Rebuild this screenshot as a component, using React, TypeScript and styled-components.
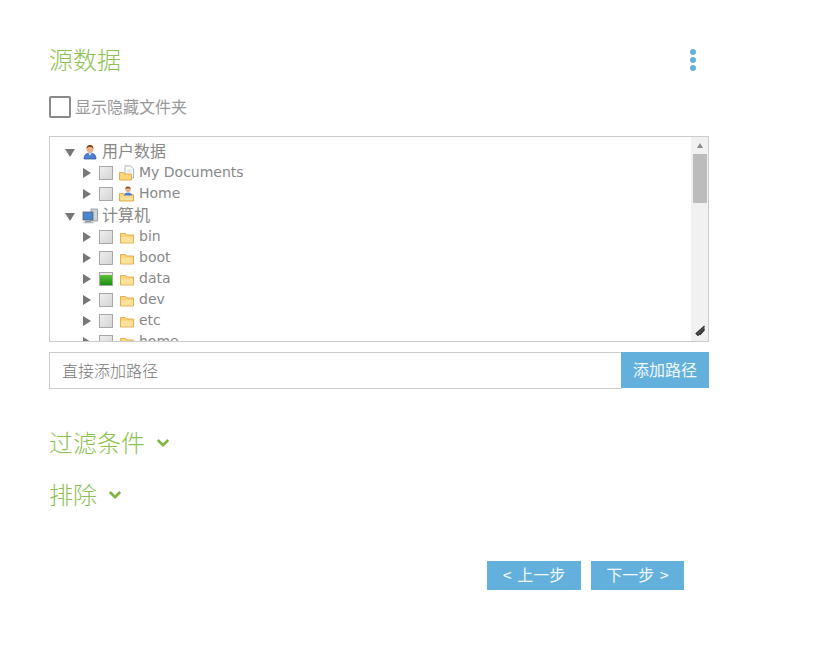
import { createGlobalStyle } from "styled-components";
import styled from "styled-components";

const CJK = `"Noto Sans CJK SC", "Noto Sans", sans-serif`;
const GREEN = "#8cc152";
const BLUE = "#64b0dc";

const GlobalStyle = createGlobalStyle`
  html, body {
    margin: 0;
    padding: 0;
    background: #fff;
    font-family: ${CJK};
  }
`;

const Page = styled.div`
  width: 660px;
  padding: 40px 0 0 49px;
`;

const Header = styled.div`
  display: flex;
  justify-content: space-between;
  align-items: center;
  height: 40px;
  padding-right: 13px;
`;

const Title = styled.h2`
  margin: 0 0 3px;
  font-size: 24px;
  line-height: 37px;
  font-weight: 300;
  color: ${GREEN};
`;

const Dots = styled.div`
  display: flex;
  flex-direction: column;
  gap: 2px;
`;

const Dot = styled.span`
  width: 6px;
  height: 6px;
  border-radius: 50%;
  background: ${BLUE};
`;

const HiddenToggle = styled.label`
  display: flex;
  align-items: center;
  gap: 4px;
  margin-top: 16px;
  height: 22px;
  font-size: 16px;
  color: #999;
`;

const ToggleText = styled.span`
  margin-bottom: 2px;
`;

const Box = styled.span`
  box-sizing: border-box;
  width: 22px;
  height: 22px;
  border: 2px solid #8a8a8a;
  border-radius: 2px;
`;

const TreePanel = styled.div`
  position: relative;
  box-sizing: border-box;
  display: flex;
  height: 206px;
  margin-top: 18px;
  border: 1px solid #ccc;
  overflow: hidden;
`;

const Tree = styled.div`
  flex: 1;
  padding: 4px 0 0 15px;
  overflow: hidden;
`;

const Row = styled.div<{ $child?: boolean; $gap?: number }>`
  display: flex;
  align-items: center;
  height: 21px;
  margin-top: ${(p) => p.$gap ?? 0}px;
  padding-left: ${(p) => (p.$child ? 18 : 0)}px;
  font-family: "DejaVu Sans", ${CJK};
  font-size: 14px;
  color: #888;
  white-space: nowrap;
`;

const Arrow = styled.span<{ $open?: boolean }>`
  width: 0;
  height: 0;
  flex: none;
  ${(p) =>
    p.$open
      ? `
    margin: 2px 7px 0 0;
    border-left: 5.5px solid transparent;
    border-right: 5.5px solid transparent;
    border-top: 8px solid #777;
  `
      : `
    margin: 1px 8px 0 0;
    border-top: 5.5px solid transparent;
    border-bottom: 5.5px solid transparent;
    border-left: 8px solid #777;
  `}
`;

const NodeCheck = styled.span<{ $checked?: boolean }>`
  box-sizing: border-box;
  flex: none;
  width: 14px;
  height: 14px;
  margin-right: 6px;
  border: 1px solid #a8a8a8;
  background: ${(p) =>
    p.$checked
      ? "linear-gradient(#e8e8e8 0 2px, #5cc23c 2px, #1e8f12)"
      : "linear-gradient(135deg, #eeeeee, #d4d4d4)"};
`;

const IconSlot = styled.span`
  display: flex;
  flex: none;
  width: 16px;
  height: 16px;
  margin-right: 4px;
`;

const Label = styled.span`
  line-height: 21px;
`;

const RootLabel = styled(Label)`
  font-family: ${CJK};
  font-size: 16px;
  font-weight: 400;
  margin-bottom: 3px;
`;

const ScrollTrack = styled.div`
  box-sizing: border-box;
  flex: none;
  display: flex;
  flex-direction: column;
  width: 17px;
  background: #f1f1f1;
  padding: 0 1px;
`;

const ScrollUp = styled.span`
  width: 0;
  height: 0;
  margin: 6px auto 6px;
  border-left: 3.5px solid transparent;
  border-right: 3.5px solid transparent;
  border-bottom: 5px solid #8c8c8c;
`;

const ScrollThumb = styled.div`
  width: 14px;
  height: 49px;
  margin: 0 auto;
  background: #bcbcbc;
`;

const Grip = styled.svg`
  position: absolute;
  right: 2px;
  bottom: 5px;
`;

const PathRow = styled.div`
  display: flex;
  height: 37px;
  margin-top: 10px;
`;

const PathInput = styled.input`
  box-sizing: border-box;
  flex: 1;
  min-width: 0;
  height: 37px;
  padding: 0 12px 2px;
  border: 1px solid #ccc;
  border-right: none;
  outline: none;
  font-family: ${CJK};
  font-size: 16px;
  font-weight: 300;
  color: #777;
  &::placeholder {
    color: #777;
    opacity: 1;
  }
`;

const BlueButton = styled.button`
  border: none;
  padding: 0 0 3px;
  background: ${BLUE};
  color: #f0f9ff;
  font-family: ${CJK};
  font-size: 16px;
  font-weight: 400;
  word-spacing: 2px;
`;

const AddButton = styled(BlueButton)`
  width: 88px;
  height: 36px;
`;

const Section = styled.div<{ $gap: number }>`
  display: flex;
  align-items: center;
  gap: 11px;
  height: 36px;
  margin-top: ${(p) => p.$gap}px;
  font-size: 24px;
  font-weight: 300;
  color: ${GREEN};
`;

const SectionLabel = styled.span`
  margin-bottom: 4px;
`;

const Footer = styled.div`
  display: flex;
  justify-content: flex-end;
  gap: 10px;
  margin-top: 48px;
  padding-right: 25px;
`;

const NavButton = styled(BlueButton)<{ $w: number }>`
  width: ${(p) => p.$w}px;
  height: 29px;
`;

function UserIcon() {
  return (
    <svg width="16" height="16" viewBox="0 0 16 16">
      <path d="M2 15c0-4 2-6 6-6s6 2 6 6z" fill="#4f7fd0" stroke="#2c4f96" strokeWidth="0.7" />
      <path d="M6.4 9.2 8 11.5l1.6-2.3z" fill="#fff" />
      <circle cx="8" cy="5" r="3.4" fill="#eeb184" />
      <path d="M4.6 5C4.4 1.8 6.2 1 8 1s3.6.8 3.4 4c-.8-1.6-1.8-2-3.4-2s-2.6.4-3.4 2z" fill="#7a4318" />
    </svg>
  );
}

function ComputerIcon() {
  return (
    <svg width="16" height="16" viewBox="0 0 16 16">
      <rect x="9" y="1" width="6.5" height="12" fill="#cfd3d8" stroke="#7d848c" strokeWidth="0.7" />
      <rect x="1" y="4" width="10" height="8" fill="#4b86cf" stroke="#5c6670" strokeWidth="0.8" />
      <rect x="3" y="12.5" width="6" height="2" fill="#8d949b" />
      <rect x="1.5" y="14" width="10" height="1.3" fill="#b4b9be" />
    </svg>
  );
}

function FolderIcon() {
  return (
    <svg width="16" height="16" viewBox="0 0 16 16">
      <path d="M1.5 14V4.5h5l1 1.5h7v8z" fill="#fbd576" stroke="#dca94a" strokeWidth="0.9" />
      <rect x="2.3" y="8" width="11.4" height="5.4" fill="#fce29c" />
    </svg>
  );
}

function DocFolderIcon() {
  return (
    <svg width="16" height="16" viewBox="0 0 16 16">
      <path d="M6 .8h5.5l3 3v9H6z" fill="#fff" stroke="#9aa0a6" strokeWidth="0.8" />
      <path d="M8 5h4.5M8 7h4.5" stroke="#c4c8cc" strokeWidth="0.8" />
      <path d="M.5 15V7.5h4l1 1.5h7v6z" fill="#fbd576" stroke="#dca94a" strokeWidth="0.9" />
    </svg>
  );
}

function HomeFolderIcon() {
  return (
    <svg width="16" height="16" viewBox="0 0 16 16">
      <path d="M.5 15V7.5h4l1 1h9v6.5z" fill="#fbd576" stroke="#dca94a" strokeWidth="0.9" />
      <path d="M5 9.5C5 7.5 6.5 6.5 9 6.5s4 1 4 3z" fill="#4f7fd0" />
      <circle cx="9" cy="3.6" r="2.6" fill="#eeb184" />
      <path d="M6.4 3.6C6.2 1.4 7.6.6 9 .6s2.8.8 2.6 3C11 2.6 10.2 2.2 9 2.2s-2 .4-2.6 1.4z" fill="#7a4318" />
      <rect x="2" y="10.5" width="12" height="3.5" fill="#fce29c" />
    </svg>
  );
}

function Chevron() {
  return (
    <svg width="14" height="10" viewBox="0 0 14 10">
      <path d="M1.8 2 7 7.2 12.2 2" fill="none" stroke="#7fb53f" strokeWidth="2.6" />
    </svg>
  );
}

const folders = ["bin", "boot", "data", "dev", "etc", "home"];

export default function App() {
  return (
    <Page>
      <GlobalStyle />
      <Header>
        <Title>源数据</Title>
        <Dots>
          <Dot />
          <Dot />
          <Dot />
        </Dots>
      </Header>

      <HiddenToggle>
        <Box />
        <ToggleText>显示隐藏文件夹</ToggleText>
      </HiddenToggle>

      <TreePanel>
        <Tree>
          <Row>
            <Arrow $open />
            <IconSlot>
              <UserIcon />
            </IconSlot>
            <RootLabel>用户数据</RootLabel>
          </Row>
          <Row $child>
            <Arrow />
            <NodeCheck />
            <IconSlot>
              <DocFolderIcon />
            </IconSlot>
            <Label>My Documents</Label>
          </Row>
          <Row $child>
            <Arrow />
            <NodeCheck />
            <IconSlot>
              <HomeFolderIcon />
            </IconSlot>
            <Label>Home</Label>
          </Row>
          <Row $gap={1}>
            <Arrow $open />
            <IconSlot>
              <ComputerIcon />
            </IconSlot>
            <RootLabel>计算机</RootLabel>
          </Row>
          {folders.map((name) => (
            <Row $child key={name}>
              <Arrow />
              <NodeCheck $checked={name === "data"} />
              <IconSlot>
                <FolderIcon />
              </IconSlot>
              <Label>{name}</Label>
            </Row>
          ))}
        </Tree>
        <ScrollTrack>
          <ScrollUp />
          <ScrollThumb />
        </ScrollTrack>
        <Grip width="11" height="11" viewBox="0 0 11 11">
          <path d="M9.5 1 1 8.5 3 10.5 9.5 4M9.5 5 5 10" stroke="#333" strokeWidth="1.1" fill="#555" />
        </Grip>
      </TreePanel>

      <PathRow>
        <PathInput placeholder="直接添加路径" />
        <AddButton>添加路径</AddButton>
      </PathRow>

      <Section $gap={36}>
        <SectionLabel>过滤条件</SectionLabel>
        <Chevron />
      </Section>
      <Section $gap={16}>
        <SectionLabel>排除</SectionLabel>
        <Chevron />
      </Section>

      <Footer>
        <NavButton $w={94}>&lt; 上一步</NavButton>
        <NavButton $w={93}>下一步 &gt;</NavButton>
      </Footer>
    </Page>
  );
}
